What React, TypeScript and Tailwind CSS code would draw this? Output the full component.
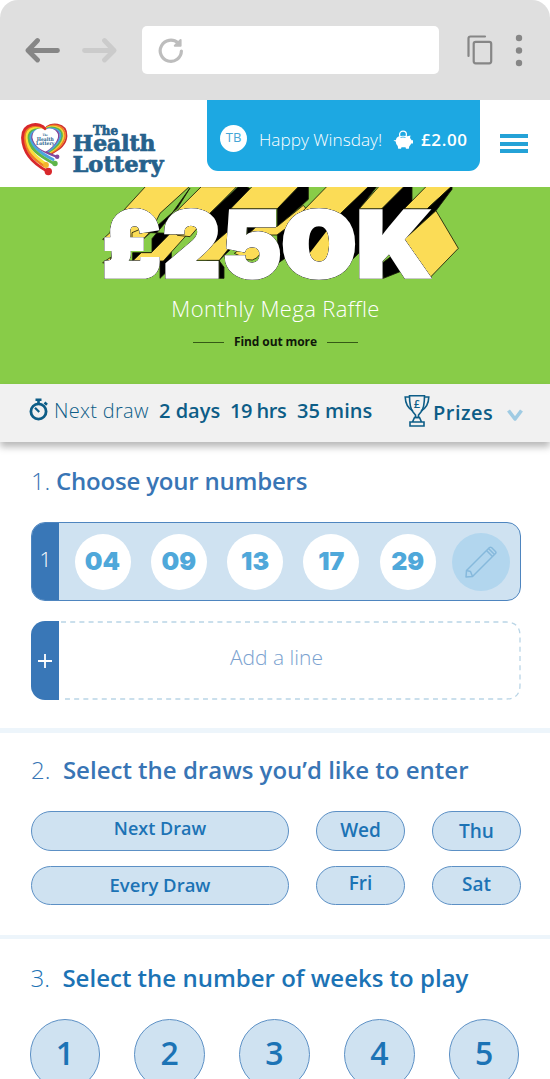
const picks = ['04', '09', '13', '17', '29'];

const draws = [
  { label: 'Next Draw', nudge: 'pb-1 text-[18px]' },
  { label: 'Wed', nudge: 'pb-0.5 text-[19px]' },
  { label: 'Thu', nudge: 'text-[19px]' },
  { label: 'Every Draw', nudge: 'text-[18.500px]' },
  { label: 'Fri', nudge: 'pb-1 text-[19px]' },
  { label: 'Sat', nudge: 'pb-0.5 text-[19px]' },
];

const weeks = [1, 2, 3, 4, 5];

function BrowserBar() {
  return (
    <div className="bg-white">
      <div className="flex h-[100px] items-center rounded-t-[18px] bg-[#dfdfdf] pl-[24px]">
        <svg width="37" height="26" viewBox="0 0 37 26" fill="none" stroke="#868686" strokeWidth="4.800" strokeLinecap="round" strokeLinejoin="round">
          <path d="M33.500 13.500H4M13.500 3.500L4 13.500L13.500 23" />
        </svg>
        <svg className="ml-[20px]" width="37" height="26" viewBox="0 0 37 26" fill="none" stroke="#cbcbcb" strokeWidth="4.800" strokeLinecap="round" strokeLinejoin="round">
          <path d="M3.500 13.500H33M23.500 3.500L33 13.500L23.500 23" />
        </svg>
        <div className="ml-[24px] flex h-[48px] w-[297px] items-center rounded-[5px] bg-white pl-[15px]">
          <svg width="28" height="28" viewBox="0 0 28 28" fill="none" stroke="#bdbdbd" strokeWidth="3.200" strokeLinecap="round">
            <path d="M24.400 15A10.600 10.600 0 1 1 21 7" />
            <path d="M23.600 4v5.800h-5.800z" fill="#bdbdbd" strokeWidth="2" strokeLinejoin="round" />
          </svg>
        </div>
        <svg className="ml-[27px]" width="28" height="32" viewBox="0 0 28 32" fill="none" stroke="#868686" strokeWidth="2.200" strokeLinecap="round">
          <path d="M2.500 22V4.500q0-2 2-2H19" />
          <rect x="7.700" y="7.800" width="17.500" height="21.500" rx="2" />
        </svg>
        <svg className="ml-[20px]" width="10" height="34" viewBox="0 0 10 34" fill="#868686">
          <circle cx="5" cy="5" r="3.200" />
          <circle cx="5" cy="17.500" r="3.200" />
          <circle cx="5" cy="30" r="3.200" />
        </svg>
      </div>
    </div>
  );
}

function Logo() {
  return (
    <svg width="146" height="56" viewBox="0 0 146 56" className="shrink-0">
      <g fill="none" strokeLinecap="round">
        {/* right half of the heart */}
        <path d="M24 7C28 0 46 0 45.500 14C45 24 36 28 30 32" stroke="#cf3030" strokeWidth="1.800" />
        <path d="M24 7.300C28 1.500 44 1.500 44 14C43 23 35 28 29 31.500" stroke="#f07f22" strokeWidth="1.900" />
        <path d="M24 7.600C28 3 42.500 3 42.500 14C41.500 22 34 27 28 31" stroke="#f4d33a" strokeWidth="1.900" />
        <path d="M24 8C28 4 41 4.500 41 14C40 21.500 33 27 27 30.500" stroke="#5db54a" strokeWidth="1.900" />
        <path d="M24 8.300C28 5 39.500 6 39.500 14C38.500 21 32 26 26 30" stroke="#4aa5de" strokeWidth="1.900" />
        <path d="M24 8.600C28 6 38 7.500 37.800 14C37 21 30 26 25 29.500" stroke="#83479b" strokeWidth="1.600" />
        {/* left ribbons, running from the heart top to the tail */}
        <path d="M24 8.600C20.500 6 10.300 7.500 10.500 16C12 23 20 29 35 34.500" stroke="#83479b" strokeWidth="2.200" />
        <path d="M24 8.300C20 5 8.500 6 8.700 16C10 24 19 31 32 37.500" stroke="#4aa5de" strokeWidth="3" />
        <path d="M24 8C20 4 6.800 4.500 6.900 16C8 26 17 33 32 41" stroke="#5db54a" strokeWidth="3" />
        <path d="M24 7.600C20 3 5 3 5.100 16C6 28 16 36 24.500 42" stroke="#f8df3a" strokeWidth="3" />
        <path d="M24 7.300C20 1.500 3 1.500 3.300 16C4 30 14 38 23 44" stroke="#f07f22" strokeWidth="2.500" />
        <path d="M24 7C20 0 1.200 0 1.500 16C2 32 13 42 26 49" stroke="#d8282c" strokeWidth="2.800" />
      </g>
      <path d="M24 8.500C20 4.500 11.500 7 11.500 15C12 22 18 27 24.500 29.500C30 27 36 21 37 14.500C37 7 28 4.500 24 8.500Z" fill="#fff" />
      <circle cx="27.300" cy="49.500" r="3.700" fill="#d8282c" />
      <circle cx="25" cy="43" r="2.900" fill="#f3b32c" />
      <circle cx="34" cy="41.500" r="2.700" fill="#5db54a" />
      <circle cx="36.200" cy="34.800" r="2.200" fill="#83479b" />
      <g fill="#26618c" fontFamily="'DejaVu Serif', serif" fontWeight="700">
        <g fontSize="5">
          <text x="21.500" y="14.300" fontSize="3" textLength="5.500" lengthAdjust="spacingAndGlyphs">The</text>
          <text x="15.800" y="18.500" textLength="17" lengthAdjust="spacingAndGlyphs">Health</text>
          <text x="15" y="23" textLength="18.500" lengthAdjust="spacingAndGlyphs">Lottery</text>
        </g>
        <g stroke="#26618c" strokeWidth="0.700">
          <text x="72" y="13.200" fontSize="12.500" textLength="25" lengthAdjust="spacingAndGlyphs">The</text>
          <text x="51.500" y="28.800" fontSize="21.500" textLength="83" lengthAdjust="spacingAndGlyphs">Health</text>
          <text x="51.500" y="49.700" fontSize="22.500" textLength="91" lengthAdjust="spacingAndGlyphs">Lottery</text>
        </g>
      </g>
    </svg>
  );
}

function PiggyBank() {
  return (
    <svg width="21" height="20" viewBox="0 0 21 20" fill="#fff">
      <circle cx="10" cy="4.500" r="3.400" fill="none" stroke="#fff" strokeWidth="1.300" />
      <path d="M4 7.500L6 6.200Q10 5.200 14.500 6.200L17.500 5.500L17 8Q18.300 9.500 18.500 10.300H20V13.500H18.200Q17.500 15.300 16.300 16.200L15.800 18.700H13L12.500 17.300H8.500L8 18.700H5.200L4.700 16Q2.800 14.300 2.700 11.500Q1 11.300 0.500 10Q2 10.800 3 9.800Q3.200 8.500 4 7.500Z" />
      <path d="M7.500 7.500Q10 6.600 12.500 7.500" stroke="#1da8e2" strokeWidth="0.800" fill="none" />
    </svg>
  );
}

function Header() {
  return (
    <header className="flex h-[87px] items-start bg-white pl-[21px]">
      <div className="w-[186px] pt-[22px]">
        <Logo />
      </div>
      <div className="flex h-[71px] w-[273px] items-center rounded-b-[11px] bg-[#1da8e2] pt-[8px] pl-[13px] text-white">
        <span className="mb-[3px] flex size-[27px] items-center justify-center rounded-full bg-white text-[13px] font-medium text-[#45a6d6]">TB</span>
        <span className="mt-px ml-[12px] w-[134px] text-[17.200px] font-light whitespace-nowrap">Happy Winsday!</span>
        <PiggyBank />
        <span className="mt-px ml-[7px] text-[17px] font-semibold tracking-[0.600px]">£2.00</span>
      </div>
      <button className="mt-[34px] ml-[20px] flex w-[28px] flex-col gap-[3.500px]" aria-label="Menu">
        <span className="h-[4px] bg-[#24a2d7]" />
        <span className="h-[4px] bg-[#24a2d7]" />
        <span className="h-[4px] bg-[#24a2d7]" />
      </button>
    </header>
  );
}

const prize = [
  { glyph: '£', x: 38, width: 174 },
  { glyph: '2', x: 219, width: 172 },
  { glyph: '5', x: 396, width: 178 },
  { glyph: '0', x: 574, width: 226 },
  { glyph: 'K', x: 800, width: 222 },
];

function PrizeTitle() {
  return (
    <svg width="380" height="103" viewBox="0 21 1140 309" className="ml-[90px] block overflow-visible">
      <g stroke="#171908" strokeWidth="2.500" strokeLinejoin="round">
        {/* £ */}
        <path d="M100 92L168 18H300L210 100L180 160L120 210L38 178L60 158Q63 120 100 92Z" fill="#fbdc56" />
        <path d="M38 248L62 232V255Z" fill="#fbdc56" />
        <path d="M178 158L262 85L300 24L228 125L186 176V218H128V245H210V295L244 262V160Z" fill="#000" />
        <path d="M126 158L150 148L178 158L160 177H126ZM128 243L154 218H184L247 154L290 165L220 243Z" fill="#fbdc56" />
        {/* 2 */}
        <path d="M228 125L334 20H440L360 100L300 170L262 166Z" fill="#fbdc56" />
        <path d="M360 100L445 20H470L486 30L420 92V210L388 240V295H402V262L386 240L350 240Z" fill="#000" />
        <path d="M312 241L416 152L424 196L388 241Z" fill="#fbdc56" />
        {/* 5 */}
        <path d="M422 86L488 18H628L562 86Z" fill="#fbdc56" />
        <path d="M562 86L628 18H655V58L562 142H472V165H486L562 142V86Z" fill="#000" />
        <path d="M472 165L500 139H562L640 76L650 88L585 165L520 165Z" fill="#fbdc56" />
        <path d="M562 164L592 142V230L566 248Z" fill="#000" />
        <path d="M433 220L455 204Q510 185 512 220Q490 255 455 230Z" fill="#fbdc56" />
        {/* 0 */}
        <path d="M630 102L712 18H840L748 104L690 130Z" fill="#fbdc56" />
        <path d="M748 104L835 20H860L808 87V218L765 260L790 190Z" fill="#000" />
        {/* K */}
        <path d="M808 86L868 18H944L876 86Z" fill="#fbdc56" />
        <path d="M876 86L944 18H966V80L876 168Z" fill="#000" />
        <path d="M943 86L1010 18H1086L1012 86Z" fill="#fbdc56" />
        <path d="M1012 86L1086 18V28L1038 92L943 178Z" fill="#000" />
        <path d="M1038 92L1105 205L1018 295L943 178Z" fill="#fbdc56" />
        <path d="M876 250L905 228L930 275L880 295Z" fill="#000" />
      </g>
      {/* the counter of the zero shows the inner faces */}
      <ellipse cx="687" cy="190" rx="60" ry="70" fill="#000" />
      <path d="M728 130Q760 195 715 244Q690 262 640 244Z" fill="#fbdc56" />
      <g fontFamily="Inter, sans-serif" fontWeight="900" fontSize="272" fill="#fff" strokeLinejoin="miter">
        {prize.map(({ glyph, x, width }) => (
          <text
            key={glyph}
            x={x}
            y="290"
            textLength={width}
            lengthAdjust="spacingAndGlyphs"
            stroke="#fff"
            strokeWidth="11"
            className="[filter:drop-shadow(0_0_0.600px_#000)_drop-shadow(0_0_0.600px_#000)]"
          >
            {glyph}
          </text>
        ))}
      </g>
    </svg>
  );
}

function Hero() {
  return (
    <section className="h-[197px] overflow-hidden bg-[#88cc48]">
      <PrizeTitle />
      <div className="flex flex-col items-center pl-px">
        <h1 className="mt-[2px] text-[22px] leading-[32px] font-light tracking-[0.400px] text-white">Monthly Mega Raffle</h1>
        <a className="mt-[9px] flex items-center gap-[10px] text-[12px] leading-[18px] font-bold tracking-[-0.100px] text-[#10180a]">
          <span className="h-px w-[31px] bg-[#355916]" />
          Find out more
          <span className="h-px w-[31px] bg-[#355916]" />
        </a>
      </div>
    </section>
  );
}

function Countdown() {
  return (
    <div className="flex h-[58px] items-center bg-[#f1f1f1] pl-[29px] text-[20px] text-[#0d5d87] shadow-[0_5px_7px_rgba(0,0,0,0.28)]">
      <svg width="20" height="23" viewBox="0 0 20 23" fill="none" stroke="#0d5d87" className="mb-[7px]">
        <circle cx="9.500" cy="13.500" r="7.600" strokeWidth="2.800" />
        <path d="M6.500 1.800h6M9.500 2v4M15.500 4.500l2.500 2.300" strokeWidth="2.600" />
        <path d="M6 9.800l4.200 4.300" strokeWidth="2.200" />
      </svg>
      <div className="mb-1 flex whitespace-nowrap">
        <span className="ml-[5px] w-[105px] font-light tracking-[0.300px]">Next draw</span>
        <span className="w-[71px] font-semibold">2 days</span>
        <span className="w-[67px] font-semibold tracking-[-0.500px]">19 hrs</span>
        <span className="w-[107px] font-semibold">35 mins</span>
      </div>
      <svg width="26" height="34" viewBox="0 0 26 34" fill="none" stroke="#0d5d87" strokeWidth="1.600" className="mb-1">
        <path d="M5.500 1.800H20.500Q20.500 14 17 18L14.500 21V23.500H11.500V21L9 18Q5.500 14 5.500 1.800Z" />
        <path d="M5.500 3H1.200Q1.500 13 9 17M20.500 3H24.800Q24.500 13 17 17" />
        <path d="M10.500 23.500H15.500L17.500 28H8.500ZM6 28H20V32H6Z" />
        <text x="13" y="13.500" fontSize="11" textAnchor="middle" fill="#0d5d87" stroke="none" fontWeight="600">£</text>
      </svg>
      <span className="ml-[3px] w-[74px] font-semibold tracking-[0.500px]">Prizes</span>
      <svg width="16" height="14" viewBox="0 0 16 14" fill="none" stroke="#9fcbe3" strokeWidth="3.600" className="mt-1">
        <path d="M1.500 2.500L8 11L14.500 2.500" strokeLinejoin="round" />
      </svg>
    </div>
  );
}

function StepHeading({ step, title, className }: { step: number; title: string; className: string }) {
  return (
    <h2 className={`flex text-[24px] leading-[34px] whitespace-nowrap ${className}`}>
      <span className="font-light">{step}.</span>
      <span className="font-semibold">{title}</span>
    </h2>
  );
}

function ChooseNumbers() {
  return (
    <section className="h-[286px] pt-[22px] pl-[31px]">
      <StepHeading step={1} title="Choose your numbers" className="gap-[6px] tracking-[-0.200px] text-[#3875b5]" />
      <div className="mt-[24px] flex h-[79px] w-[490px] overflow-hidden rounded-[14px] border border-[#4e85bf] bg-[#cfe2f1]">
        <div className="flex w-[27px] items-center justify-center bg-[#3977b7] pb-[3px] text-[21px] font-light text-white">1</div>
        <div className="flex flex-1 items-center pl-[15.500px]">
          {picks.map((n) => (
            <span key={n} className="mr-[20.300px] flex size-[56px] shrink-0 items-center justify-center rounded-full bg-white font-[Inter] text-[25px] font-black text-[#4fa8da]">
              {n}
            </span>
          ))}
          <button className="-ml-[4px] flex size-[58px] shrink-0 items-center justify-center rounded-full bg-[#b2d6ee]" aria-label="Edit line">
            <svg width="32" height="32" viewBox="0 0 32 32" fill="none" stroke="#86b9dc" strokeWidth="1.500" strokeLinejoin="round">
              <path d="M1 31L1.500 24.500L24.500 1.500Q25.500 0.800 26.500 1.500L30.500 5.500Q31.500 6.500 30.500 7.500L7.500 30.500Z" />
              <path d="M1.500 24.500L5.500 25.500L7.500 30.500M21.500 4.500L27.500 10.500M23.500 2.500L29.500 8.500" />
            </svg>
          </button>
        </div>
      </div>
      <div className="mt-[20px] flex h-[79px] w-[490px]">
        <div className="flex w-[28px] items-center justify-center rounded-l-[14px] bg-[#3977b7]">
          <svg width="14" height="14" viewBox="0 0 14 14" stroke="#fff" strokeWidth="1.800">
            <path d="M7 0v14M0 7h14" />
          </svg>
        </div>
        <button className="relative flex-1 pr-[27px] pb-[5px] text-[21px] font-light text-[#7ba2cf]">
          <svg className="absolute inset-0" width="462" height="79" viewBox="0 0 462 79" fill="none" stroke="#b9d5e6" strokeWidth="1.300" strokeDasharray="5 4.200">
            <path d="M2 1H447Q461 1 461 15V64Q461 78 447 78H2" />
          </svg>
          Add a line
        </button>
      </div>
    </section>
  );
}

function SelectDraws() {
  return (
    <section className="h-[207px] border-t-[5px] border-[#edf5fb] pt-[20px] pl-[31px]">
      <StepHeading step={2} title="Select the draws you’d like to enter" className="gap-[12.500px] text-[#3875b5]" />
      <div className="mt-[24px] grid w-[490px] grid-cols-[258px_89px_89px] gap-x-[27px] gap-y-[15px]">
        {draws.map(({ label, nudge }) => (
          <button
            key={label}
            className={`flex h-[39.500px] items-center justify-center rounded-full border border-[#5c90c5] bg-[#cfe2f1] font-semibold text-[#1c73b5] ${nudge}`}
          >
            {label}
          </button>
        ))}
      </div>
    </section>
  );
}

function SelectWeeks() {
  return (
    <section className="border-t-[4px] border-[#edf5fb] pt-[22px] pl-[29.500px]">
      <StepHeading step={3} title="Select the number of weeks to play" className="ml-px gap-[12.500px] text-[#1c73b5]" />
      <div className="mt-[24px] flex gap-[34px]">
        {weeks.map((week) => (
          <button
            key={week}
            className="flex size-[70.800px] shrink-0 items-center justify-center rounded-full border border-[#5c90c5] bg-[#cfe2f1] pb-0.5 text-[32px] font-semibold text-[#1c73b5]"
          >
            {week}
          </button>
        ))}
      </div>
    </section>
  );
}

export default function App() {
  return (
    <div className="h-[1079px] w-[550px] overflow-hidden bg-white font-['Open_Sans','Noto_Sans',sans-serif]">
      <BrowserBar />
      <Header />
      <Hero />
      <Countdown />
      <ChooseNumbers />
      <SelectDraws />
      <SelectWeeks />
    </div>
  );
}
